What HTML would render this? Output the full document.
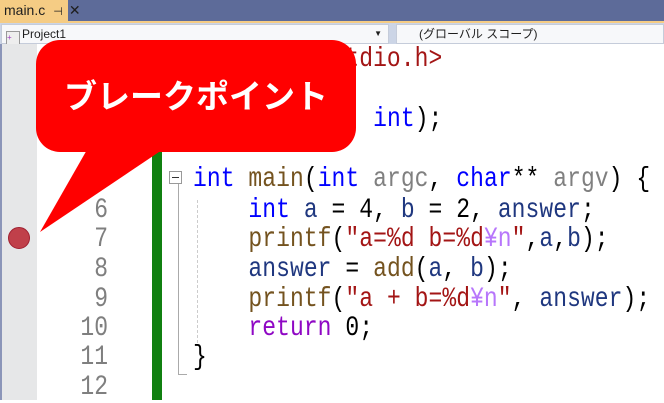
<!DOCTYPE html>
<html><head><meta charset="utf-8"><style>
body{margin:0;width:664px;height:400px;overflow:hidden;background:#fff;position:relative;font-family:"Liberation Sans","Noto Sans CJK JP",sans-serif}
.top{position:absolute;left:0;top:0;width:664px;height:23px;background:#5d6b99}
.tab{position:absolute;left:0;top:0;width:68px;height:21px;background:#f5cc84;font-size:14px;line-height:21px;color:#1e1e1e}
.tabline{position:absolute;left:0;top:21px;width:664px;height:2px;background:#f5cc84}
.nav{position:absolute;left:0;top:23px;width:664px;height:21px;background:#ccd5e6}
.dd{position:absolute;top:1px;height:18px;background:#f7f8fa;border:1px solid #c5ccda;font-size:12px;line-height:18px;color:#1e1e1e}
.gut{position:absolute;left:0;top:44px;width:37px;height:356px;background:#e6e7e8;border-left:2px solid #8b95b8;box-sizing:border-box}
.green{position:absolute;left:152px;top:150px;width:10px;height:250px;background:#108010}
.ln{position:absolute;left:60px;width:48px;text-align:right;color:#7f7f7f;font:23px "Liberation Mono",monospace;transform:scaleY(1.2)}
.code{position:absolute;left:193px;font:23px "Liberation Mono",monospace;white-space:pre;transform:scaleY(1.2);transform-origin:0 50%;letter-spacing:0.05px}
.k{color:#0000ff}.f{color:#74531f}.p{color:#808080}.v{color:#1f377f}.s{color:#a31515}.e{color:#b776fb}.r{color:#8f08c4}.d{color:#000}
</style></head><body>
<div class="top"></div>
<div class="tab"><span style="margin-left:4px">main.c</span><span style="margin-left:8px;font-size:11px">⊣</span><span style="margin-left:6px">✕</span></div>
<div class="tabline"></div>
<div class="nav">
<div class="dd" style="left:1px;width:386px"><span style="display:inline-block;width:12px;height:12px;border:1px solid #999;background:#eee;vertical-align:-2px;margin:0 2px 0 4px;font-size:8px;line-height:12px;color:#a040c0">+</span>Project1<span style="position:absolute;right:6px;font-size:8px">▼</span></div>
<div class="dd" style="left:396px;width:266px"><span style="margin-left:22px">(グローバル スコープ)</span></div>
</div>
<div class="gut"></div>
<div class="green"></div>
<div style="position:absolute;left:8px;top:227px;width:22px;height:22px;border-radius:50%;background:#c0404a;border:1px solid #a02030;box-sizing:border-box"></div>

<div class="ln" style="top:197px">6</div>
<div class="ln" style="top:226px">7</div>
<div class="ln" style="top:256px">8</div>
<div class="ln" style="top:286px">9</div>
<div class="ln" style="top:315px">10</div>
<div class="ln" style="top:344px">11</div>
<div class="ln" style="top:374px">12</div>

<div class="code" style="top:46px"><span class="p">#include </span><span class="s">&lt;stdio.h&gt;</span></div>
<div class="code" style="top:106px"><span class="k">int</span> <span class="f">add</span>(<span class="k">int</span>, <span class="k">int</span>);</div>
<div class="code" style="top:166px"><span class="k">int</span> <span class="f">main</span>(<span class="k">int</span> <span class="p">argc</span>, <span class="k">char</span>** <span class="p">argv</span>) {</div>
<div class="code" style="top:197px">    <span class="k">int</span> <span class="v">a</span> = 4, <span class="v">b</span> = 2, <span class="v">answer</span>;</div>
<div class="code" style="top:226px">    <span class="f">printf</span>(<span class="s">"a=%d b=%d</span><span class="e">¥n</span><span class="s">"</span>,<span class="v">a</span>,<span class="v">b</span>);</div>
<div class="code" style="top:256px">    <span class="v">answer</span> = <span class="f">add</span>(<span class="v">a</span>, <span class="v">b</span>);</div>
<div class="code" style="top:286px">    <span class="f">printf</span>(<span class="s">"a + b=%d</span><span class="e">¥n</span><span class="s">"</span>, <span class="v">answer</span>);</div>
<div class="code" style="top:315px">    <span class="r">return</span> 0;</div>
<div class="code" style="top:344px">}</div>

<div style="position:absolute;left:169px;top:171px;width:13px;height:13px;border:1px solid #999;box-sizing:border-box;background:#fff"><div style="position:absolute;left:2px;top:5px;width:7px;height:1px;background:#333"></div></div>
<div style="position:absolute;left:178px;top:184px;width:1px;height:191px;background:#aaa"></div>
<div style="position:absolute;left:178px;top:374px;width:9px;height:1px;background:#aaa"></div>
<div style="position:absolute;left:197px;top:200px;width:0;height:143px;border-left:1px dashed #ccc"></div>

<svg style="position:absolute;left:0;top:0" width="664" height="400">
<rect x="36" y="40" width="320" height="112" rx="24" fill="#ff0000"/>
<polygon points="88,148 165,148 40,232" fill="#ff0000"/>
</svg>
<div style="position:absolute;left:36px;top:74px;width:320px;text-align:center;color:#fff;font-weight:bold;font-size:33px;line-height:40px;font-family:'Noto Sans CJK JP',sans-serif">ブレークポイント</div>
</body></html>
